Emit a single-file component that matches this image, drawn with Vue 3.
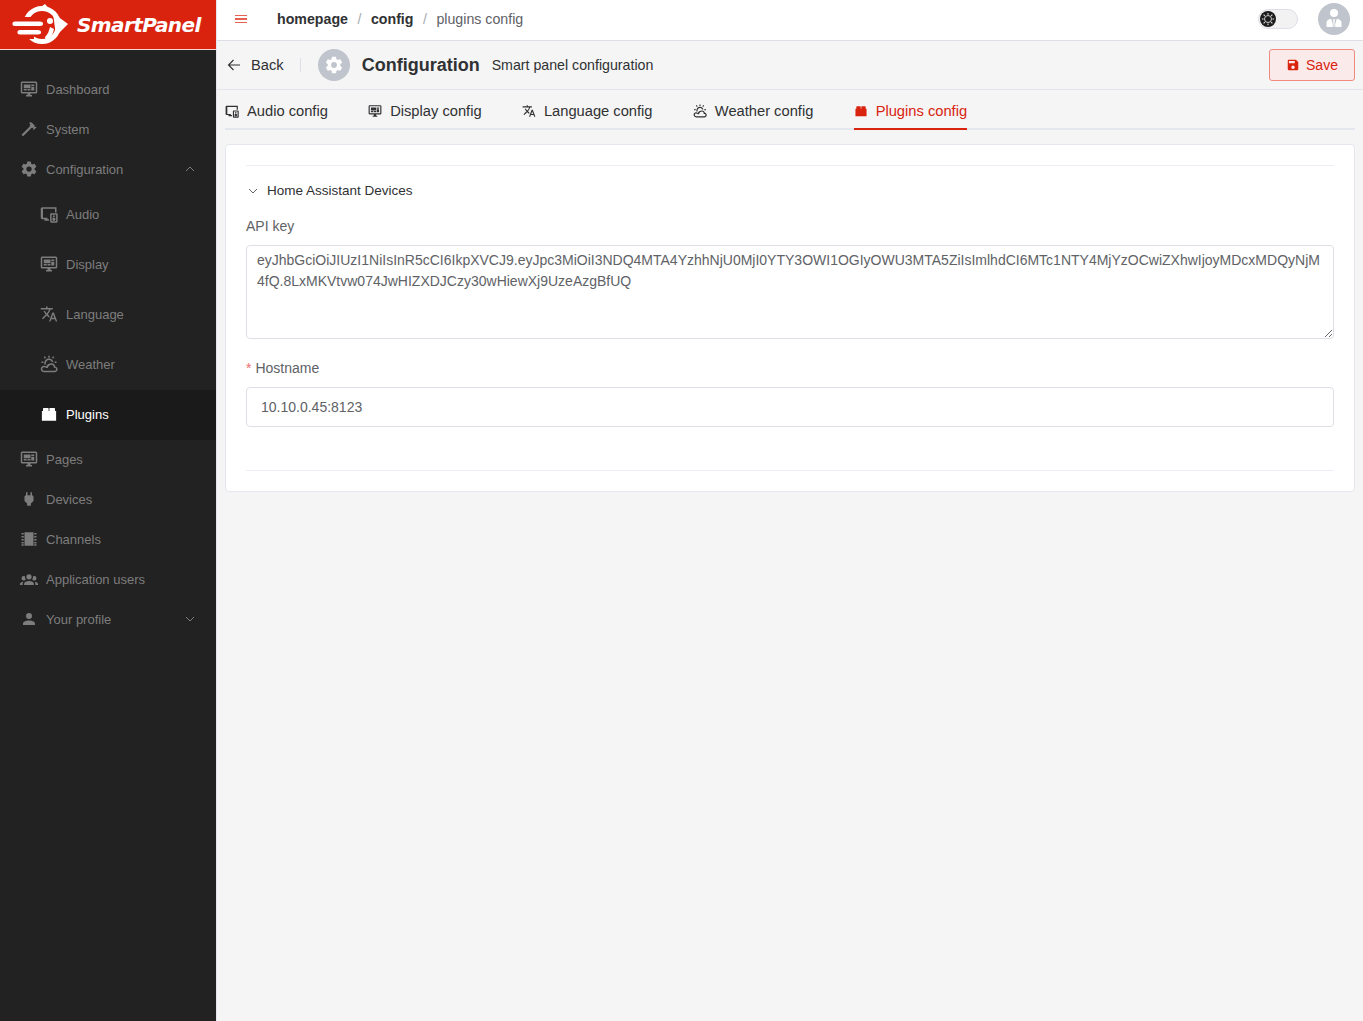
<script setup>
const icons = {
  dashboard: 'M21,16V4H3V16H21M21,2A2,2 0 0,1 23,4V16A2,2 0 0,1 21,18H14V20H16V22H8V20H10V18H3C1.89,18 1,17.1 1,16V4C1,2.89 1.89,2 3,2H21M5,6H14V11H5V6M15,6H19V8H15V6M19,9V14H15V9H19M5,12H9V14H5V12M10,12H14V14H10V12Z',
  hammer: 'M2 19.63L13.43 8.2L12.72 7.5L14.14 6.07L12 3.89C13.2 2.7 15.09 2.7 16.27 3.89L19.87 7.5L18.45 8.91H21.29L22 9.62L18.45 13.21L17.74 12.5V9.62L16.27 11.04L15.56 10.33L4.13 21.76L2 19.63Z',
  cog: 'M12,15.5A3.5,3.5 0 0,1 8.5,12A3.5,3.5 0 0,1 12,8.5A3.5,3.5 0 0,1 15.5,12A3.5,3.5 0 0,1 12,15.5M19.43,12.97C19.47,12.65 19.5,12.33 19.5,12C19.5,11.67 19.47,11.34 19.43,11L21.54,9.37C21.73,9.22 21.78,8.95 21.66,8.73L19.66,5.27C19.54,5.05 19.27,4.96 19.05,5.05L16.56,6.05C16.04,5.66 15.5,5.32 14.87,5.07L14.5,2.42C14.46,2.18 14.25,2 14,2H10C9.75,2 9.54,2.18 9.5,2.42L9.13,5.07C8.5,5.32 7.96,5.66 7.44,6.05L4.95,5.05C4.73,4.96 4.46,5.05 4.34,5.27L2.34,8.73C2.21,8.95 2.27,9.22 2.46,9.37L4.57,11C4.53,11.34 4.5,11.67 4.5,12C4.5,12.33 4.53,12.65 4.57,12.97L2.46,14.63C2.27,14.78 2.21,15.05 2.34,15.27L4.34,18.73C4.46,18.95 4.73,19.03 4.95,18.95L7.44,17.94C7.96,18.34 8.5,18.68 9.13,18.93L9.5,21.58C9.54,21.82 9.75,22 10,22H14C14.25,22 14.46,21.82 14.5,21.58L14.87,18.93C15.5,18.67 16.04,18.34 16.56,17.94L19.05,18.95C19.27,19.03 19.54,18.95 19.66,18.73L21.66,15.27C21.78,15.05 21.73,14.78 21.54,14.63L19.43,12.97Z',
  audio: 'M3 3H22V10H20V5H4V17H10V19H3C2 19 1 18 1 17V5C1 4 2 3 3 3ZM6 19H12V21H6ZM15 11H22C23 11 23.5 11.5 23.5 12.5V22C23.5 23 23 23.5 22 23.5H15C14 23.5 13.5 23 13.5 22V12.5C13.5 11.5 14 11 15 11ZM15.5 13V21.5H21.5V13ZM18.5 13.6A1.3 1.3 0 1 1 18.5 16.2A1.3 1.3 0 1 1 18.5 13.6ZM18.5 16.8A2.2 2.2 0 1 1 18.5 21.2A2.2 2.2 0 1 1 18.5 16.8Z',
  translate: 'M12.87,15.07L10.33,12.56L10.36,12.53C12.1,10.59 13.34,8.36 14.07,6H17V4H10V2H8V4H1V6H12.17C11.5,7.92 10.44,9.75 9,11.35C8.07,10.32 7.3,9.19 6.69,8H4.69C5.42,9.63 6.42,11.17 7.67,12.56L2.58,17.58L4,19L9,14L12.11,17.11L12.87,15.07M18.5,10H16.5L12,22H14L15.12,19H19.87L21,22H23L18.5,10M15.88,17L17.5,12.67L19.12,17H15.88Z',
  weather: 'M11 1H13V3.5H11ZM5 2.8L6.6 1.6L8 3.8L6.4 5ZM17.4 1.6L19 2.8L17.6 5L16 3.8ZM2 8.5H4.5V10.5H2ZM19.5 8.5H22V10.5H19.5ZM12 4.8C15 4.8 17.4 6.8 17.8 9.6C17.2 9.4 16.6 9.4 15.9 9.4C15.2 7.8 13.8 6.8 12 6.8C9.6 6.8 7.8 8.8 7.8 11.2C7.8 11.6 7.9 12 8 12.3C7.4 12.5 6.8 12.8 6.3 13.2C5.9 12.5 5.8 11.8 5.8 11C5.8 7.6 8.6 4.8 12 4.8ZM15.5 11C18 11 20 12.8 20.3 15.2C22.2 15.6 23.5 17.2 23.5 19C23.5 21.2 21.7 23 19.5 23H5.5C2.9 23 1 21 1 18.6C1 16.2 2.9 14.2 5.3 14.2C6.5 14.2 7.6 14.6 8.4 15.4C8.8 13 11.9 11 15.5 11ZM15.5 13C13 13 10.8 14.8 10.4 17.4H8.4C8 16.8 6.9 16.2 5.5 16.2C4 16.2 3 17.4 3 18.6C3 20 4.1 21 5.5 21H19.5C20.6 21 21.5 20.1 21.5 19C21.5 17.9 20.6 17 19.5 17H18.3V16C18.3 14.3 17 13 15.5 13Z',
  plugin: 'M2.5 8H4V5C4 4.4 4.4 4 5 4H10.7C11.3 4 11.5 4.4 11.5 5V8H12.5V5C12.5 4.4 12.7 4 13.3 4H19C19.6 4 20 4.4 20 5V8H21.5V21H2.5Z',
  plug: 'M16,7V3H14V7H10V3H8V7C7,7 6,8 6,9V14.5L9.5,18V21H14.5V18L18,14.5V9C18,8 17,7 16,7Z',
  chip: 'M6 3H18V21H6ZM2 4H5V6H2ZM2 8H5V10H2ZM2 12H5V14H2ZM2 16H5V18H2ZM2 19H5V21H2ZM19 4H22V6H19ZM19 8H22V10H19ZM19 12H22V14H19ZM19 16H22V18H19ZM19 19H22V21H19Z',
  group: 'M12,5.5A3.5,3.5 0 0,1 15.5,9A3.5,3.5 0 0,1 12,12.5A3.5,3.5 0 0,1 8.5,9A3.5,3.5 0 0,1 12,5.5M5,8C5.56,8 6.08,8.15 6.53,8.42C6.38,9.85 6.8,11.27 7.66,12.38C7.16,13.34 6.16,14 5,14A3,3 0 0,1 2,11A3,3 0 0,1 5,8M19,8A3,3 0 0,1 22,11A3,3 0 0,1 19,14C17.84,14 16.84,13.34 16.34,12.38C17.2,11.27 17.62,9.85 17.47,8.42C17.92,8.15 18.44,8 19,8M5.5,18.25C5.5,16.18 8.41,14.5 12,14.5C15.59,14.5 18.5,16.18 18.5,18.25V20H5.5V18.25M0,20V18.5C0,17.11 1.89,15.94 4.45,15.6C3.86,16.28 3.5,17.22 3.5,18.25V20H0M24,20H20.5V18.25C20.5,17.22 20.14,16.28 19.55,15.6C22.11,15.94 24,17.11 24,18.5V20Z',
  account: 'M12,4A4,4 0 0,1 16,8A4,4 0 0,1 12,12A4,4 0 0,1 8,8A4,4 0 0,1 12,4M12,14C16.42,14 20,15.79 20,18V20H4V18C4,15.79 7.58,14 12,14Z',
  save: 'M15,9H5V5H15M12,19A3,3 0 0,1 9,16A3,3 0 0,1 12,13A3,3 0 0,1 15,16A3,3 0 0,1 12,19M17,3H5C3.89,3 3,3.9 3,5V19A2,2 0 0,0 5,21H19A2,2 0 0,0 21,19V7L17,3Z',
}

const menu = [
  { label: 'Dashboard', icon: 'dashboard' },
  { label: 'System', icon: 'hammer' },
  {
    label: 'Configuration',
    icon: 'cog',
    open: true,
    children: [
      { label: 'Audio', icon: 'audio' },
      { label: 'Display', icon: 'dashboard' },
      { label: 'Language', icon: 'translate' },
      { label: 'Weather', icon: 'weather' },
      { label: 'Plugins', icon: 'plugin', active: true },
    ],
  },
  { label: 'Pages', icon: 'dashboard' },
  { label: 'Devices', icon: 'plug' },
  { label: 'Channels', icon: 'chip' },
  { label: 'Application users', icon: 'group' },
  { label: 'Your profile', icon: 'account', closed: true },
]

const tabs = [
  { label: 'Audio config', icon: 'audio' },
  { label: 'Display config', icon: 'dashboard' },
  { label: 'Language config', icon: 'translate' },
  { label: 'Weather config', icon: 'weather' },
  { label: 'Plugins config', icon: 'plugin', active: true },
]

const apiKey =
  'eyJhbGciOiJIUzI1NiIsInR5cCI6IkpXVCJ9.eyJpc3MiOiI3NDQ4MTA4YzhhNjU0MjI0YTY3OWI1OGIyOWU3MTA5ZiIsImlhdCI6MTc1NTY4MjYzOCwiZXhwIjoyMDcxMDQyNjM4fQ.8LxMKVtvw074JwHIZXDJCzy30wHiewXj9UzeAzgBfUQ'
</script>

<template>
  <div class="layout">
    <aside class="sidebar">
      <div class="logo">
        <svg class="logo__mark" viewBox="0 0 56 44" width="56" height="44">
          <circle cx="30" cy="22" r="16.5" fill="none" stroke="#fff" stroke-width="5" />
          <path fill="#fff" d="M23 8 L33 1 L39 8 Z" />
          <path fill="#fff" d="M41 10 L56 21 L44 33 Z" />
          <circle cx="38" cy="18" r="3" fill="#fff" />
          <path fill="#fff" d="M33 34 C36 31 37 28 38 24 L42 26 C41 31 39 35 34 38 Z" />
          <path fill="#d9230f" d="M8 14 H22 V36 H8 Z" />
          <path fill="#fff" d="M3 18.5 H28 C30 18.5 31 19.5 31 20.7 C31 22 30 23 28 23 H3 C1 23 0.5 22 0.5 20.7 C0.5 19.5 1 18.5 3 18.5 Z" />
          <path fill="#fff" d="M8 27 H26 C28 27 29 28 29 29.2 C29 30.5 28 31.5 26 31.5 H8 C6 31.5 5.5 30.5 5.5 29.2 C5.5 28 6 27 8 27 Z" />
        </svg>
        <span class="logo__text">SmartPanel</span>
      </div>

      <nav class="menu">
        <template v-for="item in menu" :key="item.label">
          <div class="menu__item">
            <svg class="menu__icon" viewBox="0 0 24 24" width="18" height="18"><path :d="icons[item.icon]" /></svg>
            <span class="menu__label">{{ item.label }}</span>
            <svg v-if="item.open || item.closed" class="menu__arrow" viewBox="0 0 10 6" width="10" height="6">
              <path :d="item.open ? 'M1 5L5 1L9 5' : 'M1 1L5 5L9 1'" />
            </svg>
          </div>
          <div
            v-for="child in item.children"
            :key="child.label"
            class="menu__sub"
            :class="{ 'menu__sub--active': child.active }"
          >
            <svg class="menu__icon" viewBox="0 0 24 24" width="18" height="18"><path :d="icons[child.icon]" /></svg>
            <span class="menu__label">{{ child.label }}</span>
          </div>
        </template>
      </nav>
    </aside>

    <div class="main">
      <header class="topbar">
        <div class="burger"><i></i><i></i><i></i></div>
        <div class="crumbs">
          <span class="crumbs__link">homepage</span>
          <span class="crumbs__sep">/</span>
          <span class="crumbs__link">config</span>
          <span class="crumbs__sep">/</span>
          <span class="crumbs__last">plugins config</span>
        </div>
        <div class="topbar__right">
          <div class="switch">
            <span class="switch__knob">
              <svg viewBox="0 0 16 16" width="14" height="14">
                <circle cx="8" cy="8" r="4" fill="none" stroke="#e4e4e4" stroke-width="1" />
                <path stroke="#e4e4e4" stroke-width="1.2" d="M8 1V3M8 13V15M1 8H3M13 8H15M3 3L4.4 4.4M11.6 11.6L13 13M3 13L4.4 11.6M11.6 4.4L13 3" />
              </svg>
            </span>
          </div>
          <div class="avatar">
            <svg viewBox="0 0 32 32" width="32" height="32">
              <circle cx="16" cy="10" r="4" fill="#fff" />
              <path fill="#fff" d="M8.5 24V20C8.5 17.5 11 16 13.2 15.8L14.8 21V24ZM17.2 24V21L18.8 15.8C21 16 23.5 17.5 23.5 20V24ZM15.2 16H16.8L16.4 24H15.6Z" />
            </svg>
          </div>
        </div>
      </header>

      <div class="pagehead">
        <div class="back">
          <svg viewBox="0 0 14 14" width="14" height="14"><path d="M13 7H1.5M6.5 2L1.5 7L6.5 12" /></svg>
          <span>Back</span>
        </div>
        <span class="pagehead__sep"></span>
        <span class="pagehead__badge">
          <svg viewBox="0 0 24 24" width="20" height="20"><path :d="icons.cog" /></svg>
        </span>
        <span class="pagehead__title">Configuration</span>
        <span class="pagehead__sub">Smart panel configuration</span>
        <button class="save" type="button">
          <svg viewBox="0 0 24 24" width="14" height="14"><path :d="icons.save" /></svg>
          Save
        </button>
      </div>

      <div class="tabs">
        <div
          v-for="tab in tabs"
          :key="tab.label"
          class="tab"
          :class="{ 'tab--active': tab.active }"
        >
          <svg viewBox="0 0 24 24" width="14" height="14"><path :d="icons[tab.icon]" /></svg>
          <span>{{ tab.label }}</span>
        </div>
      </div>

      <section class="card">
        <div class="collapse">
          <div class="collapse__head">
            <svg viewBox="0 0 10 6" width="10" height="6"><path d="M1 1L5 5L9 1" /></svg>
            <span>Home Assistant Devices</span>
          </div>
          <div class="field">
            <label class="field__label">API key</label>
            <textarea class="field__area" :value="apiKey" spellcheck="false"></textarea>
          </div>
          <div class="field field--last">
            <label class="field__label"><em>*</em>Hostname</label>
            <input class="field__input" value="10.10.0.45:8123" />
          </div>
        </div>
      </section>
    </div>
  </div>
</template>

<style scoped>
.layout {
  display: flex;
  min-height: 1021px;
  font-family: 'Liberation Sans', Arial, sans-serif;
  background: #f5f5f5;
}
.sidebar {
  width: 216px;
  flex-shrink: 0;
  background: #222;
}
.logo {
  height: 49px;
  display: flex;
  align-items: center;
  padding-left: 12px;
  background: #d9230f;
  border-bottom: 1px solid #f6d5d0;
}
.logo__mark {
  flex-shrink: 0;
}
.logo__text {
  margin-left: 9px;
  color: #fff;
  font-family: 'DejaVu Sans', sans-serif;
  font-style: italic;
  font-weight: 700;
  font-size: 20px;
  letter-spacing: -0.6px;
}
.menu {
  padding-top: 20px;
}
.menu__item {
  height: 40px;
  box-sizing: border-box;
  display: flex;
  align-items: center;
  padding: 0 21px 2px 20px;
  color: #7d7d7d;
  font-size: 13px;
}
.menu__sub {
  height: 50px;
  box-sizing: border-box;
  display: flex;
  align-items: center;
  padding: 0 0 2px 40px;
  color: #7d7d7d;
  font-size: 13px;
}
.menu__sub--active {
  background: #1a1a1a;
  color: #fff;
}
.menu__icon {
  fill: currentColor;
  margin-right: 8px;
  flex-shrink: 0;
}
.menu__label {
  flex: 1;
}
.menu__arrow {
  fill: none;
  stroke: #7d7d7d;
  stroke-width: 1;
}
.main {
  flex: 1;
  min-width: 0;
  border-left: 1px solid #e3e6ee;
  padding-bottom: 20px;
}
.topbar {
  height: 38px;
  display: flex;
  align-items: center;
  padding: 0 13px 2px 18px;
  background: #fff;
  border-bottom: 1px solid #dcdfe6;
}
.burger {
  width: 12px;
  display: flex;
  flex-direction: column;
  gap: 2px;
}
.burger i {
  height: 1.5px;
  background: #e8604f;
}
.crumbs {
  margin-left: 30px;
  font-size: 14.2px;
  display: flex;
  align-items: center;
}
.crumbs__link {
  font-weight: 700;
  color: #303133;
}
.crumbs__sep {
  margin: 0 9.5px;
  color: #a8abb2;
}
.crumbs__last {
  color: #606266;
}
.topbar__right {
  margin-left: auto;
  display: flex;
  align-items: center;
  gap: 20px;
}
.switch {
  width: 40px;
  height: 20px;
  box-sizing: border-box;
  border: 1px solid #dcdfe6;
  border-radius: 10px;
  background: #f2f2f2;
  display: flex;
  align-items: center;
}
.switch__knob {
  width: 16px;
  height: 16px;
  margin-left: 1px;
  border-radius: 50%;
  background: #1c1c1c;
  display: flex;
  align-items: center;
  justify-content: center;
}
.avatar {
  width: 32px;
  height: 32px;
  border-radius: 50%;
  background: #c0c4cc;
}
.pagehead {
  height: 48px;
  display: flex;
  align-items: center;
  padding: 0 8px 0 10px;
  border-bottom: 1px solid #e3e5ea;
}
.back {
  display: flex;
  align-items: center;
  gap: 10px;
  font-size: 14.7px;
  color: #303133;
}
.back svg {
  fill: none;
  stroke: #303133;
  stroke-width: 1.1;
}
.pagehead__sep {
  width: 1px;
  height: 14px;
  margin: 0 17px 0 16px;
  background: #dcdfe6;
}
.pagehead__badge {
  width: 32px;
  height: 32px;
  border-radius: 50%;
  background: #c0c4cc;
  display: flex;
  align-items: center;
  justify-content: center;
  fill: #fff;
}
.pagehead__title {
  margin-left: 12px;
  font-size: 18px;
  font-weight: 700;
  color: #303133;
}
.pagehead__sub {
  margin-left: 12px;
  font-size: 14.2px;
  color: #303133;
}
.save {
  margin-left: auto;
  width: 86px;
  height: 32px;
  display: flex;
  align-items: center;
  justify-content: center;
  gap: 6px;
  border: 1px solid #f08a80;
  border-radius: 3px;
  background: #fbeaea;
  color: #d9230f;
  font-family: inherit;
  font-size: 14px;
  fill: #d9230f;
}
.tabs {
  height: 40px;
  box-sizing: border-box;
  margin: 0 8px;
  display: flex;
  gap: 40.3px;
  border-bottom: 2px solid #e4e7ed;
}
.tab {
  height: 40px;
  box-sizing: border-box;
  padding-top: 2px;
  display: flex;
  align-items: center;
  gap: 8px;
  font-size: 14.7px;
  color: #303133;
  fill: #303133;
}
.tab--active {
  color: #d9230f;
  fill: #d9230f;
  box-shadow: inset 0 -2px 0 #d9230f;
}
.card {
  margin: 14px 8px 0;
  padding: 20px;
  background: #fff;
  border: 1px solid #e4e7ed;
  border-radius: 4px;
}
.collapse {
  border-top: 1px solid #ebeef5;
  border-bottom: 1px solid #ebeef5;
}
.collapse__head {
  height: 47px;
  box-sizing: border-box;
  display: flex;
  align-items: center;
  gap: 9px;
  padding: 2px 0 0 2px;
  font-size: 13.5px;
  color: #303133;
}
.collapse__head svg {
  fill: none;
  stroke: #606266;
  stroke-width: 1;
}
.field {
  margin-bottom: 16px;
}
.field--last {
  margin-bottom: 43px;
}
.field__label {
  display: block;
  height: 32px;
  line-height: 26px;
  font-size: 14px;
  color: #606266;
}
.field__label em {
  margin-right: 4px;
  font-style: normal;
  color: #f56c6c;
}
.field__area {
  display: block;
  width: 100%;
  height: 94px;
  box-sizing: border-box;
  padding: 4px 10px;
  border: 1px solid #dcdfe6;
  border-radius: 4px;
  font-family: inherit;
  font-size: 14px;
  line-height: 21px;
  color: #606266;
  outline: none;
}
.field__input {
  display: block;
  width: 100%;
  height: 40px;
  box-sizing: border-box;
  padding: 0 14px;
  border: 1px solid #dcdfe6;
  border-radius: 4px;
  font-family: inherit;
  font-size: 14px;
  color: #606266;
  outline: none;
}
</style>
